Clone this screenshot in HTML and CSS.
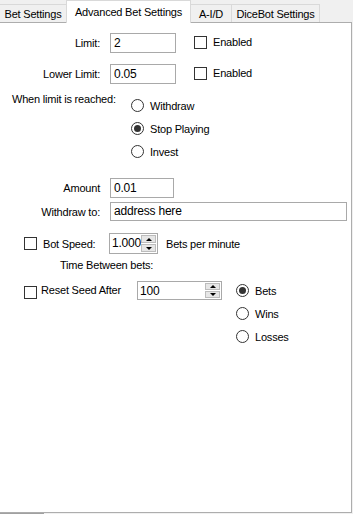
FILE: index.html
```html
<!DOCTYPE html>
<html lang="en">
<head>
  <meta charset="UTF-8">
  <title>Advanced Bet Settings</title>
  <link rel="stylesheet" href="styles.css">
</head>
<body>

  <div class="janela">
    <div class="abas">
      <div class="aba aba-bet">Bet Settings</div>
      <div class="aba ativa">Advanced Bet Settings</div>
      <div class="aba aba-aid">A-I/D</div>
      <div class="aba aba-dice">DiceBot Settings</div>
    </div>

    <div class="painel">
      <div class="linha linha-limit">
        <label class="rotulo">Limit:</label>
        <div class="caixa">2</div>
        <div class="check-item"><span class="check"></span>Enabled</div>
      </div>

      <div class="linha linha-lower">
        <label class="rotulo">Lower Limit:</label>
        <div class="caixa">0.05</div>
        <div class="check-item"><span class="check"></span>Enabled</div>
      </div>

      <div class="linha-quando">
        <span class="quando">When limit is reached:</span>
        <div class="radios">
          <div class="radio-item"><span class="radio"></span>Withdraw</div>
          <div class="radio-item"><span class="radio marcado"></span>Stop Playing</div>
          <div class="radio-item"><span class="radio"></span>Invest</div>
        </div>
      </div>

      <div class="linha linha-amount">
        <label class="rotulo">Amount</label>
        <div class="caixa curta">0.01</div>
      </div>

      <div class="linha linha-withdraw">
        <label class="rotulo">Withdraw to:</label>
        <div class="caixa longa">address here</div>
      </div>

      <div class="linha linha-speed">
        <span class="check"></span>
        <span class="speed-rotulo">Bot Speed:</span>
        <div class="spin spin-speed">
          <span class="spin-valor">1.000</span>
          <div class="setas">
            <span class="seta cima"></span>
            <span class="seta baixo"></span>
          </div>
        </div>
        <span class="bpm">Bets per minute</span>
      </div>

      <div class="tempo">Time Between bets:</div>

      <div class="linha-seed">
        <span class="check"></span>
        <span class="seed-rotulo">Reset Seed After</span>
        <div class="spin spin-seed">
          <span class="spin-valor">100</span>
          <div class="setas">
            <span class="seta cima"></span>
            <span class="seta baixo"></span>
          </div>
        </div>
        <div class="radios radios-seed">
          <div class="radio-item"><span class="radio marcado"></span>Bets</div>
          <div class="radio-item"><span class="radio"></span>Wins</div>
          <div class="radio-item"><span class="radio"></span>Losses</div>
        </div>
      </div>
    </div>
    <div class="rodape"></div>
  </div>

</body>
</html>
```

FILE: styles.css
```css
body {
  margin: 0;
  background-color: #f0f0f0;
  font-family: 'Liberation Sans', Arial, sans-serif;
  font-size: 11px;
  letter-spacing: -0.2px;
  color: #000;
}
.janela {
  width: 353px;
  height: 514px;
  overflow: hidden;
}
.abas {
  display: flex;
  align-items: flex-end;
  height: 22px;
  margin-left: -1px;
}
.aba {
  height: 18px;
  line-height: 18px;
  text-align: center;
  box-sizing: border-box;
  background-color: #f0f0f0;
  border: 1px solid #d9d9d9;
  border-bottom: none;
  margin-right: -1px;
  white-space: nowrap;
}
.aba-bet {
  width: 68px;
}
.aba-aid {
  width: 42px;
}
.aba-dice {
  width: 89px;
}
.aba.ativa {
  position: relative;
  z-index: 1;
  width: 125px;
  height: 23px;
  line-height: 22px;
  margin-bottom: -1px;
  background-color: #fff;
}
.painel {
  margin-left: -1px;
  width: 351px;
  height: 489px;
  background-color: #fff;
  border: 1px solid #adadad;
}
.rodape {
  width: 44px;
  height: 2px;
  background-color: #a0a0a0;
}

.linha {
  display: flex;
  align-items: center;
}
.rotulo {
  width: 110px;
  text-align: right;
  padding-right: 10px;
  box-sizing: border-box;
}
.caixa {
  width: 66px;
  height: 20px;
  line-height: 19px;
  border: 1px solid #a9a9a9;
  box-sizing: border-box;
  padding-left: 3px;
  font-size: 12px;
}
.caixa.curta {
  width: 64px;
}
.caixa.longa {
  width: 237px;
  height: 19px;
  line-height: 17px;
}
.check-item {
  display: flex;
  align-items: center;
  margin-left: 18px;
  margin-top: -2px;
}
.check {
  display: inline-block;
  width: 13px;
  height: 13px;
  border: 1px solid #333;
  box-sizing: border-box;
  background-color: #fff;
  margin-right: 6px;
  flex-shrink: 0;
}

.linha-limit {
  margin-top: 10px;
}
.linha-lower {
  margin-top: 11px;
}

.linha-quando {
  display: flex;
  margin-top: 9px;
}
.quando {
  width: 131px;
  padding-left: 12px;
  box-sizing: border-box;
  white-space: nowrap;
}
.radios {
  display: flex;
  flex-direction: column;
  gap: 10px;
  margin-top: 6px;
}
.radio-item {
  display: flex;
  align-items: center;
  height: 13px;
}
.radio {
  width: 13px;
  height: 13px;
  border: 1px solid #333;
  border-radius: 50%;
  box-sizing: border-box;
  margin-right: 6px;
  display: flex;
  align-items: center;
  justify-content: center;
}
.radio.marcado::after {
  content: "";
  width: 7px;
  height: 7px;
  border-radius: 50%;
  background-color: #333;
}

.linha-amount {
  margin-top: 20px;
}
.linha-withdraw {
  margin-top: 4px;
}
.linha-speed {
  margin-top: 12px;
  padding-left: 24px;
}
.speed-rotulo {
  width: 66px;
}
.spin {
  display: flex;
  align-items: stretch;
  border: 1px solid #a9a9a9;
  box-sizing: border-box;
  background-color: #fff;
}
.spin-valor {
  flex: 1;
  padding-left: 2px;
  line-height: 18px;
  font-size: 12px;
}
.spin-speed {
  width: 49px;
  height: 21px;
}
.spin-seed {
  width: 85px;
  height: 19px;
}
.setas {
  display: flex;
  flex-direction: column;
  width: 15px;
  padding: 1px 1px 1px 0;
  gap: 1px;
}
.seta {
  flex: 1;
  background-color: #e6e6e6;
  border: 1px solid #bcbcbc;
  display: flex;
  align-items: center;
  justify-content: center;
}
.seta::after {
  content: "";
  border-left: 3px solid transparent;
  border-right: 3px solid transparent;
}
.seta.cima::after {
  border-bottom: 3px solid #000;
}
.seta.baixo::after {
  border-top: 3px solid #000;
}
.bpm {
  margin-left: 8px;
}
.tempo {
  margin-top: 5px;
  padding-left: 60px;
}

.linha-seed {
  display: flex;
  align-items: flex-start;
  margin-top: 10px;
  padding-left: 24px;
}
.linha-seed .check {
  margin-top: 5px;
  margin-right: 4px;
}
.seed-rotulo {
  width: 96px;
  margin-top: 3px;
  white-space: nowrap;
}
.radios-seed {
  margin-top: 3px;
  margin-left: 14px;
}
```
